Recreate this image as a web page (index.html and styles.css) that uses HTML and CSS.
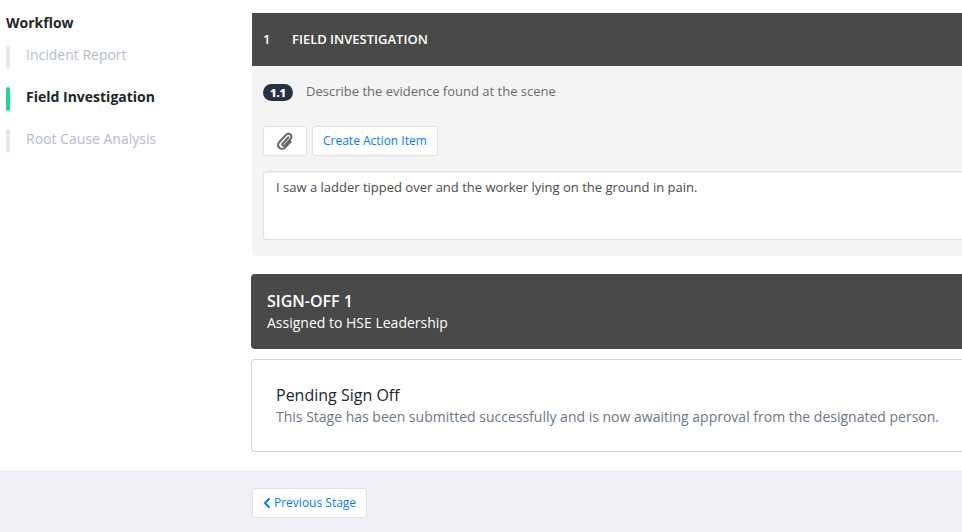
FILE: index.html
```html
<!DOCTYPE html>
<html lang="en">
<head>
<meta charset="utf-8">
<meta name="viewport" content="width=device-width, initial-scale=1">
<title>Field Investigation</title>
<link rel="stylesheet" href="styles.css">
</head>
<body>
<div class="layout">
  <nav class="workflow" aria-labelledby="workflow-title">
    <h2 id="workflow-title" class="workflow-title">Workflow</h2>
    <ul class="steps">
      <li><a class="step" href="#incident">Incident Report</a></li>
      <li><a class="step step-active" href="#field" aria-current="step">Field Investigation</a></li>
      <li><a class="step" href="#root">Root Cause Analysis</a></li>
    </ul>
  </nav>
  <main class="content">
    <section class="section" id="field">
      <h1 class="section-header"><span class="section-number">1</span><span>FIELD INVESTIGATION</span></h1>
      <div class="section-body">
        <div class="question">
          <span class="badge">1.1</span>
          <label for="evidence">Describe the evidence found at the scene</label>
        </div>
        <div class="actions">
          <button class="button button-attach" type="button" aria-label="Attach file">
            <svg class="clip" viewBox="0 0 16 18" aria-hidden="true"><path d="M11.500 5.200 5.700 11.500c-.7.8-.5 1.600 0 2 .6.6 1.300.5 1.900-.1l5.800-6.200c1.400-1.500 1.300-3.500.1-4.600-1.200-1.200-3.200-1.100-4.500.3L2.500 9.800c-1.800 2-1.700 4.500-.1 6 1.600 1.500 4.200 1.400 5.900-.4l5.300-5.700"/></svg>
          </button>
          <button class="button" type="button">Create Action Item</button>
        </div>
        <textarea class="answer" id="evidence">I saw a ladder tipped over and the worker lying on the ground in pain.</textarea>
      </div>
    </section>
    <section class="signoff">
      <h2 class="signoff-title">SIGN-OFF 1</h2>
      <p class="signoff-text">Assigned to HSE Leadership</p>
    </section>
    <section class="pending">
      <h3 class="pending-title">Pending Sign Off</h3>
      <p class="pending-text">This Stage has been submitted successfully and is now awaiting approval from the designated person.</p>
    </section>
  </main>
</div>
<footer class="footer">
  <button class="button button-previous" type="button">
    <svg class="chevron" viewBox="0 0 8 12" aria-hidden="true"><path d="M6.500 1.500 2 6l4.500 4.500"/></svg>
    Previous Stage
  </button>
</footer>
</body>
</html>
```
FILE: styles.css
```css
* {
  box-sizing: border-box;
}

body {
  margin: 0;
  min-height: 100vh;
  display: flex;
  flex-direction: column;
  background: #fff;
  color: #212529;
  font-family: "Open Sans", "Noto Sans", sans-serif;
  font-size: 14px;
  line-height: 20px;
}

h1, h2, h3, p, ul {
  margin: 0;
  padding: 0;
}

.layout {
  display: grid;
  grid-template-columns: 251px minmax(0, 1fr);
}

.workflow {
  padding: 13px 6px;
}

.workflow-title {
  font-size: 14px;
  font-weight: 700;
}

.steps {
  display: grid;
  gap: 18px;
  margin-top: 12px;
  list-style: none;
}

.step {
  display: flex;
  gap: 16px;
  height: 24px;
  color: #b5bdca;
  text-decoration: none;
}

.step::before {
  content: "";
  width: 4px;
  border-radius: 2px;
  background: #e4e7ed;
}

.step-active {
  color: #212529;
  font-weight: 700;
}

.step-active::before {
  background: #1bd993;
}

.content {
  padding: 13px 0 18px;
}

.section {
  margin-left: 1px;
}

.section-header {
  display: flex;
  padding: 16px 11px;
  background: #494949;
  color: #fff;
  font-size: 13px;
  font-weight: 600;
  line-height: 21px;
}

.section-number {
  width: 29px;
}

.section-body {
  padding: 16px 0 16px 11px;
  border-radius: 5px 0 0 5px;
  background: #f4f4f4;
}

.question {
  display: flex;
  align-items: flex-end;
  gap: 13px;
  color: #6b6b6b;
  font-size: 13px;
  line-height: 19px;
}

.badge {
  width: 30px;
  border-radius: 9px;
  background: #26323f;
  color: #fff;
  font-size: 11px;
  font-weight: 800;
  line-height: 17px;
  text-align: center;
}

.actions {
  display: flex;
  gap: 5px;
  margin: 25px 0 15px;
}

.button {
  display: flex;
  align-items: center;
  justify-content: center;
  height: 30px;
  padding: 0 10px;
  border: 1px solid #e1e1e1;
  border-radius: 3px;
  background: #fff;
  color: #007bff;
  font-family: inherit;
  font-size: 12px;
  line-height: 18px;
}

.button-attach {
  width: 44px;
}

.clip {
  width: 16px;
  height: 18px;
  fill: none;
  stroke: #666;
  stroke-width: 2;
  stroke-linecap: round;
}

.answer {
  display: block;
  width: 100%;
  height: 69px;
  padding: 5px 12px;
  border: 1px solid #e1e1e1;
  border-right: 0;
  border-radius: 4px 0 0 4px;
  background: #fff;
  box-shadow: inset 0 1px 0 #f0f0f0;
  color: #4a4a4a;
  font-family: inherit;
  font-size: 13px;
  line-height: 20px;
  resize: none;
}

.signoff {
  margin-top: 18px;
  padding: 16px 16px 15px;
  border-radius: 4px 0 0 4px;
  background: #494949;
  color: #fff;
}

.signoff-title {
  font-size: 16px;
  font-weight: 600;
  line-height: 22px;
}

.signoff-text,
.pending-text {
  line-height: 22px;
}

.pending {
  margin-top: 10px;
  padding: 24px 0 23px 24px;
  border: 1px solid #d0d1d9;
  border-right: 0;
  border-radius: 4px 0 0 4px;
}

.pending-title {
  font-size: 16px;
  font-weight: 500;
  line-height: 22px;
}

.pending-text {
  color: #6b7788;
}

.footer {
  flex: 1;
  padding: 18px 0 14px 252px;
  background: #f0f1f7;
}

.button-previous {
  gap: 3px;
}

.chevron {
  width: 8px;
  height: 12px;
  fill: none;
  stroke: #007bff;
  stroke-width: 2;
}
```
